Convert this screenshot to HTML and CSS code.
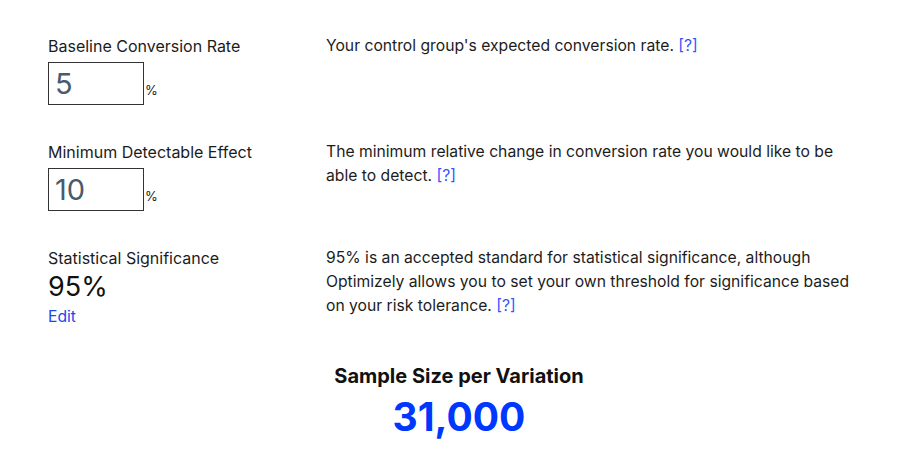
FILE: index.html
```html
<!DOCTYPE html>
<html>
<head>
<meta charset="utf-8">
<link rel="stylesheet" href="styles.css">
</head>
<body>
<div class="calc">
  <div class="row">
    <div class="field">
      <div class="label">Baseline Conversion Rate</div>
      <div class="input-line"><div class="box">5</div><span class="pct">%</span></div>
    </div>
    <p class="desc">Your control group's expected conversion rate. <a class="help">[?]</a></p>
  </div>
  <div class="row">
    <div class="field">
      <div class="label">Minimum Detectable Effect</div>
      <div class="input-line"><div class="box">10</div><span class="pct">%</span></div>
    </div>
    <p class="desc">The minimum relative change in conversion rate you would like to be able to detect. <a class="help">[?]</a></p>
  </div>
  <div class="row">
    <div class="field">
      <div class="label">Statistical Significance</div>
      <div class="big">95%</div>
      <a class="edit">Edit</a>
    </div>
    <p class="desc">95% is an accepted standard for statistical significance, although Optimizely allows you to set your own threshold for significance based on your risk tolerance. <a class="help">[?]</a></p>
  </div>
  <div class="result">
    <div class="result-title">Sample Size per Variation</div>
    <div class="result-value">31,000</div>
  </div>
</div>
</body>
</html>
```
FILE: styles.css
```css
html, body { margin: 0; padding: 0; background: #fff; }
body {
  font-family: Inter, "Noto Sans", sans-serif;
  color: #1c1c1c;
  font-size: 15.7px;
}
.calc { padding: 34px 48px 0 48px; }
.row {
  display: grid;
  grid-template-columns: 278px 535px;
  margin-bottom: 35px;
}
.label { line-height: 24px; font-size: 16px; }
.input-line { display: flex; align-items: flex-end; margin-top: 4px; }
.box {
  height: 41px;
  width: 88px;
  border: 1px solid #333;
  font-size: 29px;
  line-height: 41px;
  color: #4a5a6c;
  padding-left: 6px;
  box-sizing: content-box;
}
.pct { font-size: 13px; margin-left: 1px; margin-bottom: 7px; }
.desc { margin: 0; line-height: 24px; }
.help { color: #3355ff; }
.big { font-size: 27px; line-height: 32px; color: #111; margin-top: 1px; }
.edit { color: #2244ee; display: block; line-height: 20px; margin-top: 4px; }
.result { text-align: center; padding: 2px 0 0 18px; }
.result-title { font-weight: 700; font-size: 20px; line-height: 24px; color: #111; }
.result-value { font-weight: 700; font-size: 39px; line-height: 50px; color: #0037ff; margin-top: 4px; }
```
